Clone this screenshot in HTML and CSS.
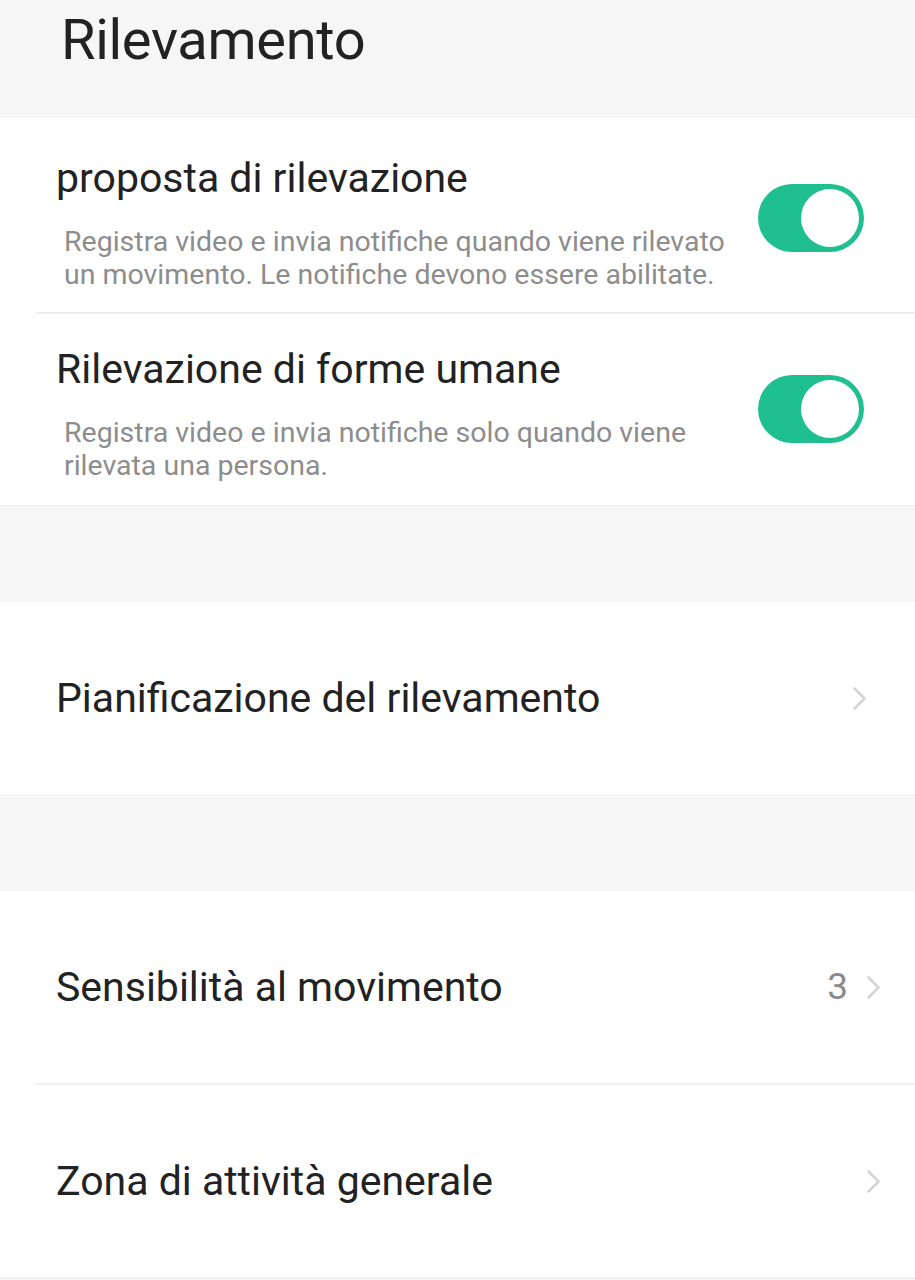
FILE: index.html
```html
<!DOCTYPE html>
<html lang="it">
<head>
<meta charset="utf-8">
<link rel="stylesheet" href="styles.css">
</head>
<body>
<header class="page-header">
  <h1 class="page-title">Rilevamento</h1>
</header>

<section class="group group-toggles">
  <div class="row row-toggle row-toggle-1">
    <div class="row-text">
      <div class="row-title">proposta di rilevazione</div>
      <div class="row-desc">Registra video e invia notifiche quando viene rilevato un movimento. Le notifiche devono essere abilitate.</div>
    </div>
    <div class="switch on"><span class="knob"></span></div>
  </div>
  <div class="divider"></div>
  <div class="row row-toggle row-toggle-2">
    <div class="row-text">
      <div class="row-title">Rilevazione di forme umane</div>
      <div class="row-desc">Registra video e invia notifiche solo quando viene rilevata una persona.</div>
    </div>
    <div class="switch on"><span class="knob"></span></div>
  </div>
</section>

<div class="spacer"></div>

<section class="group group-single">
  <div class="row row-nav row-nav-narrow">
    <div class="row-title">Pianificazione del rilevamento</div>
    <div class="row-end">
      <svg class="chev" viewBox="0 0 15 25" width="15" height="25"><path d="M2.5 2.5 L12.5 12.5 L2.5 22.5" fill="none" stroke="#d4d4d4" stroke-width="2.6" stroke-linecap="round" stroke-linejoin="round"/></svg>
    </div>
  </div>
</section>

<div class="spacer"></div>

<section class="group group-double">
  <div class="row row-nav">
    <div class="row-title">Sensibilità al movimento</div>
    <div class="row-end">
      <span class="value">3</span>
      <svg class="chev" viewBox="0 0 15 25" width="15" height="25"><path d="M2.5 2.5 L12.5 12.5 L2.5 22.5" fill="none" stroke="#d4d4d4" stroke-width="2.6" stroke-linecap="round" stroke-linejoin="round"/></svg>
    </div>
  </div>
  <div class="divider"></div>
  <div class="row row-nav">
    <div class="row-title">Zona di attività generale</div>
    <div class="row-end">
      <svg class="chev" viewBox="0 0 15 25" width="15" height="25"><path d="M2.5 2.5 L12.5 12.5 L2.5 22.5" fill="none" stroke="#d4d4d4" stroke-width="2.6" stroke-linecap="round" stroke-linejoin="round"/></svg>
    </div>
  </div>
  <div class="divider bottom"></div>
</section>
</body>
</html>
```

FILE: styles.css
```css
html, body {
  margin: 0;
  padding: 0;
  background: #f6f6f6;
  font-family: Roboto, "Noto Sans", "Liberation Sans", sans-serif;
  color: #222222;
}

.page-header {
  height: 118px;
  background: #f6f6f6;
  padding-left: 61px;
  box-sizing: border-box;
}

.page-title {
  margin: 0;
  padding-top: 8px;
  font-size: 56px;
  font-weight: 400;
  line-height: 64px;
  color: #222222;
  letter-spacing: -0.3px;
}

.group {
  background: #ffffff;
}

.row {
  display: flex;
  align-items: center;
  justify-content: space-between;
  padding-left: 56px;
  padding-right: 51px;
}

.row-toggle {
  align-items: flex-start;
  box-sizing: border-box;
}

.row-toggle-1 {
  height: 194px;
  padding-top: 36px;
}

.row-toggle-2 {
  height: 191px;
  padding-top: 31px;
}

.row-text {
  display: flex;
  flex-direction: column;
  gap: 23px;
}

.row-title {
  font-size: 41px;
  line-height: 48px;
  color: #222222;
  white-space: nowrap;
}

.row-desc {
  font-size: 28.5px;
  line-height: 33px;
  color: #8d8d8d;
  max-width: 690px;
  padding-left: 8px;
}

.switch {
  width: 106px;
  height: 68px;
  border-radius: 34px;
  background: #1fbf8f;
  display: flex;
  align-items: center;
  justify-content: flex-end;
  padding: 5px;
  box-sizing: border-box;
  flex-shrink: 0;
  margin-top: 30px;
}

.knob {
  width: 58px;
  height: 58px;
  border-radius: 50%;
  background: #ffffff;
}

.divider {
  height: 2px;
  background: #f0f0f0;
  margin-left: 35px;
}

.divider.bottom {
  margin-left: 0;
}

.spacer {
  height: 97px;
}

.row-nav {
  height: 192px;
  padding-right: 34px;
}

.row-nav-narrow {
  padding-right: 48px;
}

.row-end {
  display: flex;
  align-items: center;
  gap: 18px;
}

.value {
  font-size: 37px;
  line-height: 44px;
  color: #8a8a8a;
}

.chev {
  display: block;
}
```
